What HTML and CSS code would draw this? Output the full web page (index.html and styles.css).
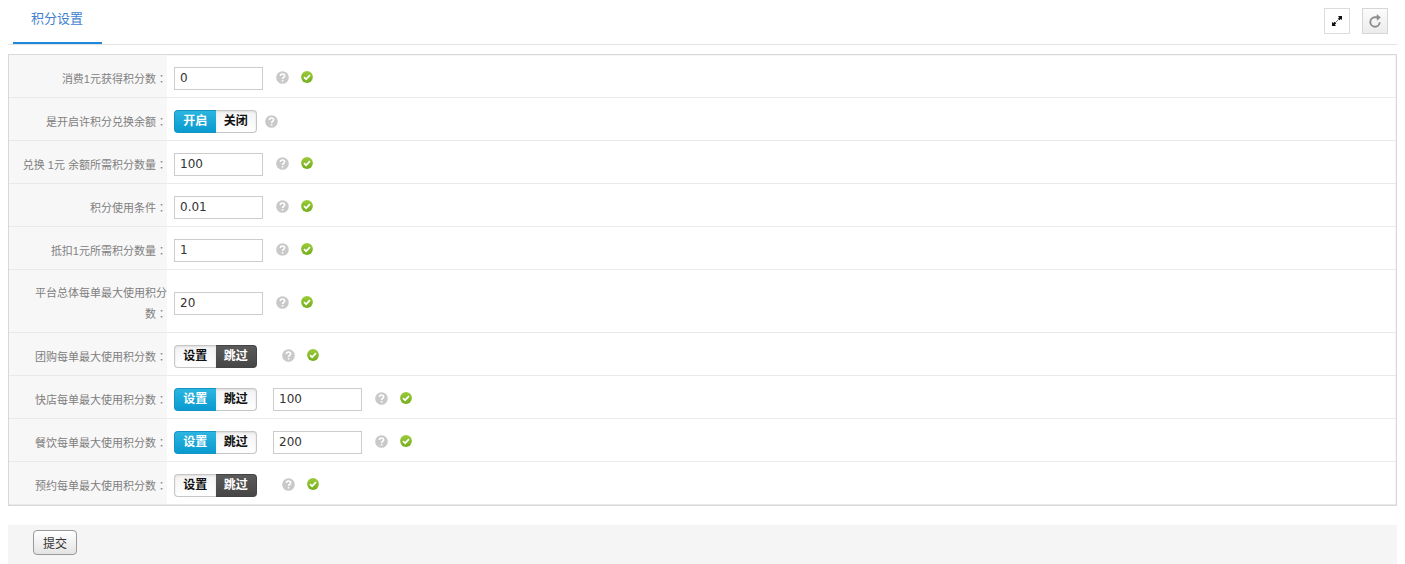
FILE: index.html
```html
<!DOCTYPE html>
<html lang="zh-CN">
<head>
<meta charset="utf-8">
<title>积分设置</title>
<link rel="stylesheet" href="styles.css">
</head>
<body>
<svg class="sprite" aria-hidden="true">
  <symbol id="help" viewBox="0 0 14 14">
    <circle cx="7" cy="7" r="6.8" fill="#c9c9c9"/>
    <path d="M4.7 5.4c0-1.4 1-2.2 2.3-2.2s2.3.8 2.3 2c0 1.5-2.2 1.6-2.2 3.3M7.1 9.6v1.6" fill="none" stroke="#fff" stroke-width="1.7"/>
  </symbol>
  <symbol id="ok" viewBox="0 0 12 12">
    <linearGradient id="green" x1="0" y1="0" x2="0" y2="1"><stop offset="0" stop-color="#9ccb3c"/><stop offset="1" stop-color="#74ae1c"/></linearGradient>
    <circle cx="6" cy="6" r="5.9" fill="url(#green)"/>
    <path d="M3 6.2l2.1 2 3.9-4" fill="none" stroke="#fff" stroke-width="1.7"/>
  </symbol>
</svg>
<header class="topbar">
  <nav><a class="tab" href="#settings">积分设置</a></nav>
  <div class="tools">
    <button class="tool" type="button" aria-label="全屏">
      <svg width="12" height="12" viewBox="0 0 12 12"><path d="M7 1h4v4L9.7 3.9 8.3 5.3 6.8 3.8l1.4-1.4zM1 11V7l1.3 1.1 1.5-1.4 1.5 1.5-1.4 1.4L5 11z" fill="#111"/><path d="M5 7l2-2" stroke="#777" stroke-width="1"/></svg>
    </button>
    <button class="tool tool-shaded" type="button" aria-label="刷新">
      <svg width="14" height="14" viewBox="0 0 14 14"><path d="M9.5 3.3H7a4.7 4.7 0 1 0 4.7 5" fill="none" stroke="#8c8c8c" stroke-width="1.9"/><path d="M8.8 0l4 3.4-4 3.4z" fill="#8c8c8c"/></svg>
    </button>
  </div>
</header>
<form id="settings">
  <div class="panel">
    <div class="row">
      <label class="name" for="earn">消费1元获得积分数<span lang="zh-TW">：</span></label>
      <div class="field"><input class="text" id="earn" type="text" value="0"><span class="hints"><svg class="help"><use href="#help"/></svg><svg class="ok"><use href="#ok"/></svg></span></div>
    </div>
    <div class="row">
      <span class="name" id="n-open">是开启许积分兑换余额<span lang="zh-TW">：</span></span>
      <div class="field">
        <div class="switch" role="radiogroup" aria-labelledby="n-open">
          <label class="opt on"><input type="radio" name="open" checked>开启</label><label class="opt off"><input type="radio" name="open">关闭</label>
        </div>
        <span class="hints near"><svg class="help"><use href="#help"/></svg></span>
      </div>
    </div>
    <div class="row">
      <label class="name" for="rate">兑换 1元 余额所需积分数量<span lang="zh-TW">：</span></label>
      <div class="field"><input class="text" id="rate" type="text" value="100"><span class="hints"><svg class="help"><use href="#help"/></svg><svg class="ok"><use href="#ok"/></svg></span></div>
    </div>
    <div class="row">
      <label class="name" for="cond">积分使用条件<span lang="zh-TW">：</span></label>
      <div class="field"><input class="text" id="cond" type="text" value="0.01"><span class="hints"><svg class="help"><use href="#help"/></svg><svg class="ok"><use href="#ok"/></svg></span></div>
    </div>
    <div class="row">
      <label class="name" for="deduct">抵扣1元所需积分数量<span lang="zh-TW">：</span></label>
      <div class="field"><input class="text" id="deduct" type="text" value="1"><span class="hints"><svg class="help"><use href="#help"/></svg><svg class="ok"><use href="#ok"/></svg></span></div>
    </div>
    <div class="row">
      <label class="name" for="total">平台总体每单最大使用积分数<span lang="zh-TW">：</span></label>
      <div class="field"><input class="text" id="total" type="text" value="20"><span class="hints"><svg class="help"><use href="#help"/></svg><svg class="ok"><use href="#ok"/></svg></span></div>
    </div>
    <div class="row">
      <span class="name" id="n-group">团购每单最大使用积分数<span lang="zh-TW">：</span></span>
      <div class="field">
        <div class="switch" role="radiogroup" aria-labelledby="n-group">
          <label class="opt on"><input type="radio" name="group">设置</label><label class="opt off"><input type="radio" name="group" checked>跳过</label>
        </div>
        <span class="hints far"><svg class="help"><use href="#help"/></svg><svg class="ok"><use href="#ok"/></svg></span>
      </div>
    </div>
    <div class="row">
      <label class="name" for="shop">快店每单最大使用积分数<span lang="zh-TW">：</span></label>
      <div class="field">
        <div class="switch" role="radiogroup" aria-label="快店">
          <label class="opt on"><input type="radio" name="shopmode" checked>设置</label><label class="opt off"><input type="radio" name="shopmode">跳过</label>
        </div>
        <input class="text second" id="shop" type="text" value="100"><span class="hints"><svg class="help"><use href="#help"/></svg><svg class="ok"><use href="#ok"/></svg></span>
      </div>
    </div>
    <div class="row">
      <label class="name" for="meal">餐饮每单最大使用积分数<span lang="zh-TW">：</span></label>
      <div class="field">
        <div class="switch" role="radiogroup" aria-label="餐饮">
          <label class="opt on"><input type="radio" name="mealmode" checked>设置</label><label class="opt off"><input type="radio" name="mealmode">跳过</label>
        </div>
        <input class="text second" id="meal" type="text" value="200"><span class="hints"><svg class="help"><use href="#help"/></svg><svg class="ok"><use href="#ok"/></svg></span>
      </div>
    </div>
    <div class="row">
      <span class="name" id="n-book">预约每单最大使用积分数<span lang="zh-TW">：</span></span>
      <div class="field">
        <div class="switch" role="radiogroup" aria-labelledby="n-book">
          <label class="opt on"><input type="radio" name="book">设置</label><label class="opt off"><input type="radio" name="book" checked>跳过</label>
        </div>
        <span class="hints far"><svg class="help"><use href="#help"/></svg><svg class="ok"><use href="#ok"/></svg></span>
      </div>
    </div>
  </div>
  <div class="actions"><button class="submit" type="submit">提交</button></div>
</form>
</body>
</html>
```
FILE: styles.css
```css
* { box-sizing: border-box; }
body {
  margin: 0 8px;
  background: #fff;
  color: #333;
  font: 12px/20px "Liberation Sans", "Noto Sans CJK SC", sans-serif;
}
.sprite { position: absolute; width: 0; height: 0; }
.topbar {
  display: flex;
  justify-content: space-between;
  align-items: flex-start;
  height: 45px;
  margin-bottom: 9px;
  padding: 0 9px 0 5px;
  border-bottom: 1px solid #e3e3e3;
}
.tab {
  display: block;
  height: 44px;
  padding: 9px 19px 0 18px;
  border-bottom: 2px solid #1e88dc;
  color: #3f7fd0;
  font-size: 13px;
  text-decoration: none;
}
.tools { display: flex; gap: 12px; padding-top: 8px; }
.tool {
  display: flex;
  align-items: center;
  justify-content: center;
  width: 26px;
  height: 26px;
  padding: 0;
  border: 1px solid #dcdcdc;
  background: #fff;
}
.tool-shaded { background: linear-gradient(#fcfcfc, #ececec); border-color: #d6d6d6; }
.panel { border: 1px solid #d8d8d8; box-shadow: inset 0 0 0 1px #f6f6f6; }
.row {
  display: grid;
  grid-template-columns: 158px 1fr;
  min-height: 43px;
  border-bottom: 1px solid #e9e9e9;
}
.name {
  align-content: center;
  padding: 13px 0 7px 8px;
  background: #f7f7f7;
  color: #808080;
  font-size: 11px;
  line-height: 21px;
  text-align: right;
}
.field { display: flex; align-items: center; padding: 4px 7px 0; }
.text {
  width: 89px;
  height: 23px;
  padding: 0 5px;
  border: 1px solid #ccc;
  border-radius: 0;
  background: #fff;
  color: #333;
  font: 12px "DejaVu Sans", sans-serif;
}
.second { margin-left: 16px; }
.hints { display: flex; align-items: center; gap: 12px; margin-left: 13px; padding-bottom: 2px; }
.near { margin-left: 8px; padding-bottom: 0; }
.far { margin-left: 25px; }
.help { width: 13px; height: 13px; }
.ok { width: 12px; height: 12px; }
.switch { display: flex; width: 83px; height: 23px; font-weight: bold; }
.opt {
  flex: 1;
  border: 1px solid #c6c6c6;
  background: linear-gradient(#f3f3f3, #fff);
  box-shadow: inset 0 1px 2px #ddd;
  color: #111;
  font-size: 12px;
  line-height: 21px;
  text-align: center;
}
.opt input { position: absolute; appearance: none; margin: 0; opacity: 0; }
.on { border-right: 0; border-radius: 4px 0 0 4px; }
.off { border-left: 0; border-radius: 0 4px 4px 0; }
.on:has(:checked) {
  border-color: #1494c2;
  background: linear-gradient(#2bb5e0, #0a9ad0);
  box-shadow: none;
  color: #fff;
}
.off:has(:checked) {
  border-color: #444;
  background: linear-gradient(#5a5a5a, #464646);
  box-shadow: none;
  color: #fff;
}
.actions { margin-top: 19px; padding: 5px 25px 9px; background: #f5f5f5; }
.submit {
  display: block;
  width: 44px;
  height: 25px;
  padding: 0;
  border: 1px solid #999;
  border-radius: 4px;
  background: linear-gradient(#fff, #e4e4e4);
  color: #333;
  font: 12px "Liberation Sans", "Noto Sans CJK SC", sans-serif;
}
```
